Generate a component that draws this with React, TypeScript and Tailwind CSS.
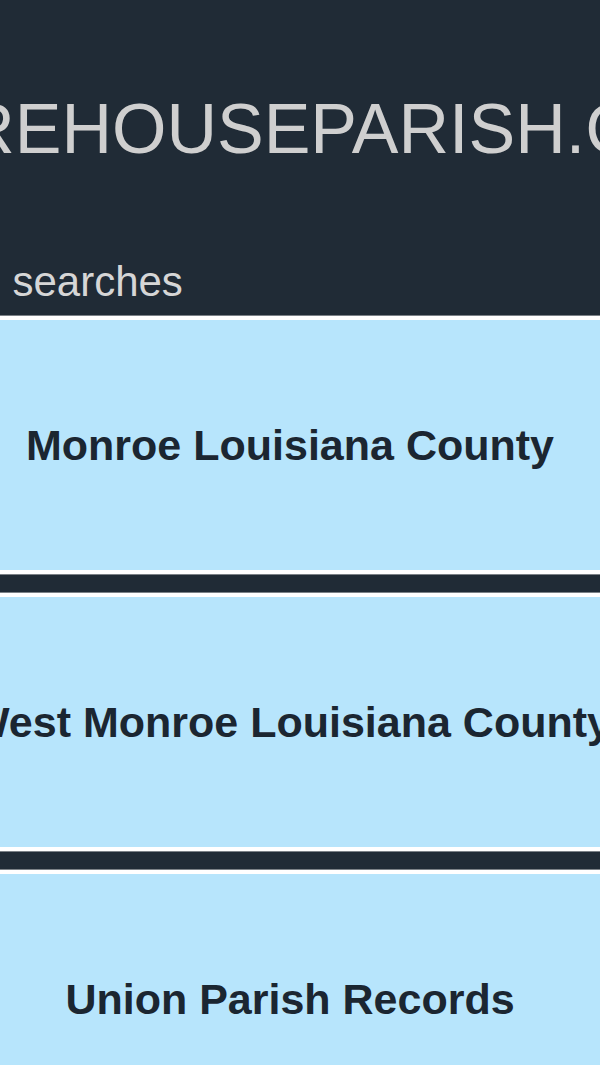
import * as React from 'react';

// ── Related search links ──────────────────────────────────────────────────────
const LINKS = [
  'Monroe Louisiana County',
  'West Monroe Louisiana County',
  'Union Parish Records',
  'Morehouse Parish Court Records',
];

function SearchCard({ label }: { label: string }) {
  return (
    <a
      href="#"
      className="flex h-[258px] items-center justify-center border-[4px] border-white bg-[#b7e5fc] pr-5 ring-1 ring-[#7b8187]"
    >
      <span className="whitespace-nowrap text-[43px] font-bold leading-none text-[#1b2631]">
        {label}
      </span>
    </a>
  );
}

export default function App() {
  return (
    <div
      className="flex h-[1065px] w-[600px] justify-center overflow-hidden bg-[#202b36]"
      style={{ fontFamily: '"Liberation Sans", Arial, sans-serif' }}
    >
      <div className="w-[920px] shrink-0">
        {/* header */}
        <header className="h-[316px] pt-[94px]">
          <h1 className="whitespace-nowrap text-center text-[70px] font-normal leading-none text-[#cfcfcf]">
            MOREHOUSEPARISH.COM
          </h1>
          <p className="mt-[97px] pl-4 text-[42px] leading-none text-[#d6d6d6]">
            Related searches
          </p>
        </header>

        {/* results */}
        <div className="flex flex-col gap-[19px]">
          {LINKS.map((l) => (
            <SearchCard key={l} label={l} />
          ))}
        </div>
      </div>
    </div>
  );
}
